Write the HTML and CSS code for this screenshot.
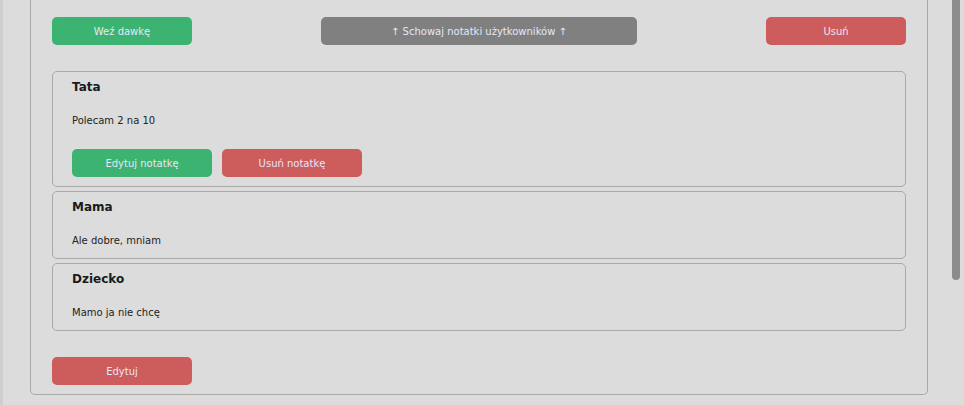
FILE: index.html
```html
<!DOCTYPE html>
<html lang="pl">
<head>
<meta charset="utf-8">
<title>Notatki</title>
<link rel="stylesheet" href="styles.css">
</head>
<body>
<div class="page">
  <div class="strip"></div>
  <main class="main">
    <section class="card">
      <div class="toolbar">
        <button class="btn btn-green">Weź dawkę</button>
        <button class="btn btn-gray btn-wide">↑ Schowaj notatki użytkowników ↑</button>
        <button class="btn btn-red">Usuń</button>
      </div>
      <div class="notes">
        <article class="note">
          <h3 class="note-title">Tata</h3>
          <p class="note-text">Polecam 2 na 10</p>
          <div class="note-actions">
            <button class="btn btn-green">Edytuj notatkę</button>
            <button class="btn btn-red">Usuń notatkę</button>
          </div>
        </article>
        <article class="note">
          <h3 class="note-title">Mama</h3>
          <p class="note-text">Ale dobre, mniam</p>
        </article>
        <article class="note">
          <h3 class="note-title">Dziecko</h3>
          <p class="note-text">Mamo ja nie chcę</p>
        </article>
      </div>
      <div class="footer">
        <button class="btn btn-red">Edytuj</button>
      </div>
    </section>
  </main>
  <div class="scroll-thumb"></div>
</div>
</body>
</html>
```
FILE: styles.css
```css
html, body {
  margin: 0;
  padding: 0;
  height: 100%;
  overflow: hidden;
  background: #dcdcdc;
  font-family: "DejaVu Sans", Verdana, sans-serif;
  color: #1e1e1e;
}

.page {
  position: relative;
  display: flex;
  height: 405px;
}

.strip {
  width: 3px;
  flex: none;
  background: #cfcfcf;
}

.main {
  flex: 1;
  padding: 0 36px 0 27px;
}

.card {
  border: 1px solid #a9a9a9;
  border-top: 0;
  border-radius: 0 0 5px 5px;
  padding: 17px 21px 9px 21px;
}

.toolbar {
  display: flex;
  justify-content: space-between;
  align-items: center;
}

.btn {
  width: 140px;
  height: 28px;
  border: 0;
  border-radius: 5px;
  padding: 0;
  font-family: "DejaVu Sans", Verdana, sans-serif;
  font-size: 10px;
  color: #e6e6fa;
  cursor: pointer;
}

.btn-wide {
  width: 316px;
}

.btn-green { background: #3cb371; }
.btn-red { background: #cd5c5c; }
.btn-gray { background: #808080; }

.notes {
  margin-top: 26px;
  display: flex;
  flex-direction: column;
  gap: 4px;
}

.note {
  border: 1px solid #a9a9a9;
  border-radius: 5px;
  padding: 8px 19px 9px;
}

.note-title {
  margin: 0;
  font-size: 12px;
  line-height: 14px;
  font-weight: bold;
  color: #1a1a1a;
}

.note-text {
  margin: 21px 0 2px;
  font-size: 10px;
  line-height: 12px;
  color: #222;
}

.note-actions {
  margin-top: 22px;
  display: flex;
  gap: 10px;
}

.footer {
  margin-top: 26px;
  display: flex;
}

.scroll-thumb {
  position: absolute;
  top: 0;
  left: 952px;
  width: 8px;
  height: 280px;
  background: #8c8c8c;
  border-radius: 0 0 4px 4px;
}
```
